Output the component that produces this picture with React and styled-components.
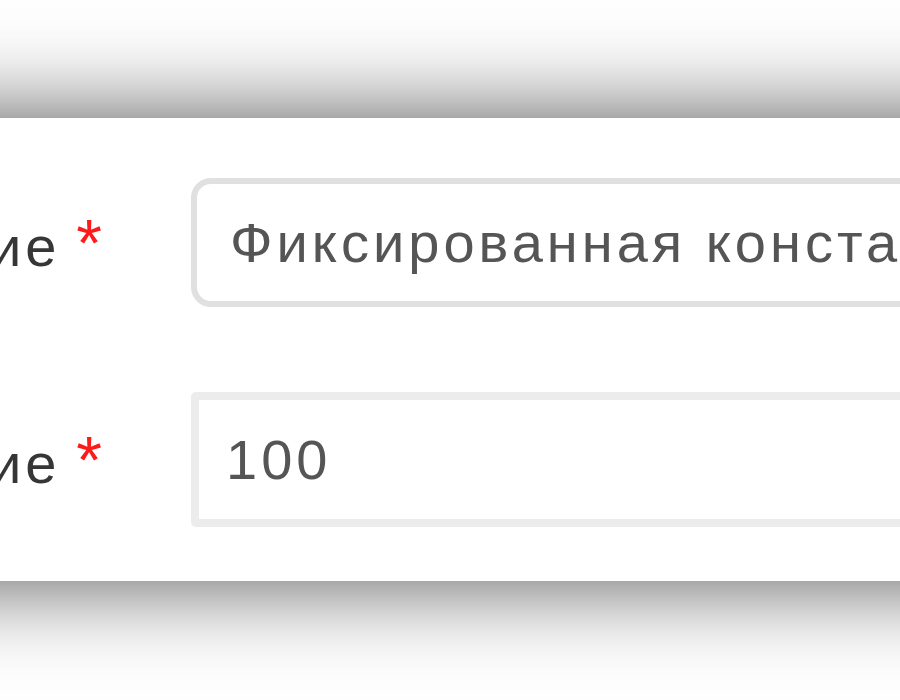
import React from "react";
import styled, { createGlobalStyle } from "styled-components";

const Global = createGlobalStyle`
  html, body {
    margin: 0;
    padding: 0;
    background: #ffffff;
    overflow: hidden;
    width: 900px;
    height: 700px;
  }
  body {
    font-family: "Liberation Sans", Arial, sans-serif;
  }
`;

const Page = styled.div`
  width: 900px;
  height: 700px;
  padding-top: 118px;
  box-sizing: border-box;
  overflow: hidden;
`;

const Panel = styled.section`
  width: 1200px;
  margin-left: -150px;
  padding: 60px 0 54px 150px;
  box-sizing: border-box;
  background: #ffffff;
  box-shadow: 0 0 90px rgba(0, 0, 0, 0.68);
  display: flex;
  flex-direction: column;
  gap: 85px;
`;

const Row = styled.div`
  display: flex;
  align-items: center;
`;

const LabelCell = styled.label`
  width: 106px;
  margin-right: 85px;
  display: flex;
  justify-content: flex-end;
  align-items: baseline;
  font-size: 56px;
  letter-spacing: 4px;
  color: #363636;
  white-space: nowrap;
  flex-shrink: 0;
`;

const Required = styled.span`
  color: #ff1a1a;
  font-size: 66px;
  margin-left: 16px;
`;

const Field = styled.div`
  width: 900px;
  height: ${(p) => p.$h}px;
  box-sizing: border-box;
  border: ${(p) => (p.$rounded ? "6px solid #e0e0e0" : "8px solid #ececec")};
  border-radius: ${(p) => (p.$rounded ? "20px" : "5px")};
  padding-left: ${(p) => p.$pad}px;
  display: flex;
  align-items: center;
  font-size: 56px;
  letter-spacing: 4px;
  color: #555555;
  white-space: nowrap;
  overflow: hidden;
  flex-shrink: 0;
`;

export default function App() {
  return (
    <>
      <Global />
      <Page>
        <Panel>
          <Row>
            <LabelCell>
              Значение<Required>*</Required>
            </LabelCell>
            <Field $h={129} $rounded $pad={33}>
              Фиксированная константа
            </Field>
          </Row>
          <Row>
            <LabelCell>
              Значение<Required>*</Required>
            </LabelCell>
            <Field $h={135} $pad={27}>
              100
            </Field>
          </Row>
        </Panel>
      </Page>
    </>
  );
}
